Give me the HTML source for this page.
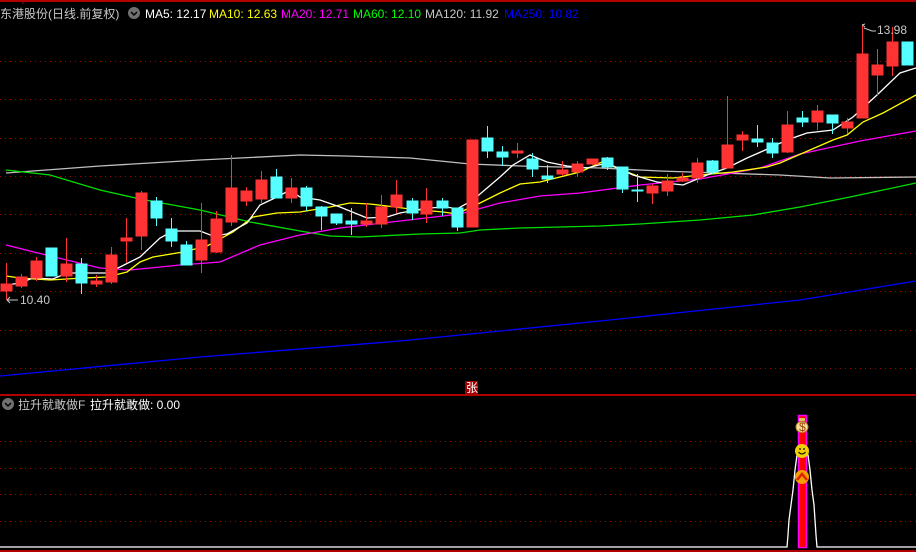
<!DOCTYPE html>
<html><head><meta charset="utf-8"><style>
html,body{margin:0;padding:0;background:#000;width:916px;height:552px;overflow:hidden}
svg{display:block}
text{font-family:"Liberation Sans","Noto Sans CJK SC",sans-serif;font-size:12px}
</style></head><body>
<svg width="916" height="552" viewBox="0 0 916 552" xmlns="http://www.w3.org/2000/svg">
<rect width="916" height="552" fill="#000"/>
<line x1="0" y1="1" x2="916" y2="1" stroke="#b00000" stroke-width="2"/>
<line x1="23" y1="0" x2="23" y2="4" stroke="#b00000"/>
<g stroke="#a00000" stroke-dasharray="1,4" stroke-width="1">
<line x1="0" y1="61.5" x2="916" y2="61.5"/><line x1="0" y1="99.5" x2="916" y2="99.5"/>
<line x1="0" y1="138.5" x2="916" y2="138.5"/><line x1="0" y1="176.5" x2="916" y2="176.5"/>
<line x1="0" y1="214.5" x2="916" y2="214.5"/><line x1="0" y1="253.5" x2="916" y2="253.5"/>
<line x1="0" y1="291.5" x2="916" y2="291.5"/><line x1="0" y1="330.5" x2="916" y2="330.5"/>
<line x1="0" y1="368.5" x2="916" y2="368.5"/>
<line x1="0" y1="441.5" x2="916" y2="441.5"/><line x1="0" y1="468.5" x2="916" y2="468.5"/>
<line x1="0" y1="494.5" x2="916" y2="494.5"/><line x1="0" y1="521.5" x2="916" y2="521.5"/>
</g>
<line x1="0" y1="395" x2="916" y2="395" stroke="#b00000" stroke-width="2"/>

<!-- MA lines -->
<g fill="none" stroke-width="1.3">
<polyline stroke="#0000ff" points="0,376 200,357 400,341 600,321 800,300 916,281"/>
<polyline stroke="#c0c0c0" points="6,173 100,166 200,160 300,155 345,156 410,158 470,164 520,166 600,168 660,171 780,175 830,178 916,177"/>
<polyline stroke="#00e000" points="6,170 50,175 100,190 140,199 200,210 250,222 300,231 330,236 360,237 420,234 460,233 480,230 520,228 600,226 640,224 700,220 753,215 800,207 850,197 916,183"/>
<polyline stroke="#ff00ff" points="6,245 50,256 100,268 130,270 180,265 220,262 260,245 300,235 340,228 400,221 460,214 500,203 540,196 580,193 640,185 700,179 760,168 800,154 860,141 916,131"/>
<polyline stroke="#ffff00" points="6,276 20,278 50,280 83,278 107,277 127,272 140,262 153,257 183,252 207,246 233,232 253,217 277,213 300,212 330,207 350,203 370,204 387,206 410,209 443,212 457,214 467,209 480,203 500,193 520,184 540,182 560,177 580,172 602,162 640,177 673,178 700,175 733,172 767,167 780,163 833,140 847,135 863,122 883,113 916,95"/>
<polyline stroke="#ffffff" points="6,285 20,283 33,278 53,279 67,273 83,273 107,273 120,267 140,257 160,238 173,231 200,231 213,236 227,234 247,223 260,205 277,197 290,190 300,197 320,200 340,207 367,218 387,217 400,213 427,208 447,207 457,209 473,200 500,177 513,165 530,155 547,162 567,166 587,168 607,163 633,175 657,182 683,185 707,175 727,168 747,158 763,151 787,140 807,133 833,130 853,117 877,95 900,73 916,68"/>
</g>

<!-- candles -->
<g id="c">
<!-- red: wick stroke + body -->
<g fill="#ff3333" stroke="#ff3333">
<line x1="6.5" y1="263" x2="6.5" y2="300"/><rect x="1" y="284" width="11" height="7"/>
<line x1="21.5" y1="274" x2="21.5" y2="288"/><rect x="16" y="277" width="11" height="9"/>
<line x1="36.5" y1="257" x2="36.5" y2="281"/><rect x="31" y="261" width="11" height="17"/>
<line x1="66.5" y1="238" x2="66.5" y2="282"/><rect x="61" y="264" width="11" height="12"/>
<line x1="96.5" y1="275" x2="96.5" y2="287"/><rect x="91" y="281" width="11" height="3"/>
<line x1="111.5" y1="247" x2="111.5" y2="284"/><rect x="106" y="255" width="11" height="27"/>
<line x1="126.5" y1="218" x2="126.5" y2="263"/><rect x="121" y="238" width="11" height="3"/>
<line x1="141.5" y1="191" x2="141.5" y2="250"/><rect x="136" y="193" width="11" height="43"/>
<line x1="201.5" y1="203" x2="201.5" y2="273"/><rect x="196" y="240" width="11" height="20"/>
<line x1="216.5" y1="211" x2="216.5" y2="253"/><rect x="211" y="219" width="11" height="33"/>
<line x1="231.5" y1="155" x2="231.5" y2="226"/><rect x="226" y="188" width="11" height="34"/>
<line x1="246.5" y1="187" x2="246.5" y2="206"/><rect x="241" y="191" width="11" height="10"/>
<line x1="261.5" y1="171" x2="261.5" y2="203"/><rect x="256" y="180" width="11" height="19"/>
<line x1="291.5" y1="178" x2="291.5" y2="203"/><rect x="286" y="188" width="11" height="10"/>
<line x1="366.5" y1="203" x2="366.5" y2="227"/><rect x="361" y="221" width="11" height="3"/>
<line x1="381.5" y1="195" x2="381.5" y2="228"/><rect x="376" y="207" width="11" height="17"/>
<line x1="396.5" y1="180" x2="396.5" y2="213"/><rect x="391" y="195" width="11" height="12"/>
<line x1="426.5" y1="188" x2="426.5" y2="223"/><rect x="421" y="201" width="11" height="13"/>
<rect x="467" y="140" width="11" height="87"/>
<line x1="517.5" y1="143" x2="517.5" y2="158"/><rect x="512" y="151" width="11" height="2"/>
<line x1="562.5" y1="161" x2="562.5" y2="176"/><rect x="557" y="170" width="11" height="4"/>
<line x1="577.5" y1="161" x2="577.5" y2="177"/><rect x="572" y="164" width="11" height="8"/>
<line x1="592.5" y1="159" x2="592.5" y2="165"/><rect x="587" y="159" width="11" height="5"/>
<line x1="652.5" y1="184" x2="652.5" y2="204"/><rect x="647" y="186" width="11" height="7"/>
<line x1="667.5" y1="174" x2="667.5" y2="196"/><rect x="662" y="181" width="11" height="10"/>
<line x1="682.5" y1="173" x2="682.5" y2="182"/><rect x="677" y="178" width="11" height="3"/>
<line x1="697.5" y1="158" x2="697.5" y2="183"/><rect x="692" y="163" width="11" height="15"/>
<line x1="727.5" y1="96" x2="727.5" y2="168"/><rect x="722" y="145" width="11" height="23"/>
<line x1="742.5" y1="131" x2="742.5" y2="151"/><rect x="737" y="135" width="11" height="5"/>
<line x1="787.5" y1="111" x2="787.5" y2="153"/><rect x="782" y="125" width="11" height="27"/>
<line x1="817.5" y1="105" x2="817.5" y2="130"/><rect x="812" y="111" width="11" height="11"/>
<line x1="847.5" y1="118" x2="847.5" y2="134"/><rect x="842" y="122" width="11" height="6"/>
<line x1="862.5" y1="25" x2="862.5" y2="118"/><rect x="857" y="54" width="11" height="64"/>
<line x1="877.5" y1="49" x2="877.5" y2="95"/><rect x="872" y="65" width="11" height="10"/>
<line x1="892.5" y1="27" x2="892.5" y2="76"/><rect x="887" y="42" width="11" height="24"/>
</g>
<g fill="#55ffff" stroke="#55ffff">
<line x1="51.5" y1="248" x2="51.5" y2="276"/><rect x="46" y="248" width="11" height="28"/>
<line x1="81.5" y1="258" x2="81.5" y2="294"/><rect x="76" y="264" width="11" height="19"/>
<line x1="156.5" y1="197" x2="156.5" y2="226"/><rect x="151" y="201" width="11" height="17"/>
<line x1="171.5" y1="218" x2="171.5" y2="247"/><rect x="166" y="229" width="11" height="12"/>
<line x1="186.5" y1="241" x2="186.5" y2="265"/><rect x="181" y="245" width="11" height="20"/>
<line x1="276.5" y1="169" x2="276.5" y2="198"/><rect x="271" y="177" width="11" height="21"/>
<line x1="306.5" y1="186" x2="306.5" y2="211"/><rect x="301" y="188" width="11" height="18"/>
<line x1="321.5" y1="206" x2="321.5" y2="230"/><rect x="316" y="207" width="11" height="9"/>
<line x1="336.5" y1="214" x2="336.5" y2="225"/><rect x="331" y="214" width="11" height="9"/>
<line x1="351.5" y1="208" x2="351.5" y2="235"/><rect x="346" y="221" width="11" height="3"/>
<line x1="412.5" y1="198" x2="412.5" y2="220"/><rect x="407" y="201" width="11" height="12"/>
<line x1="442.5" y1="198" x2="442.5" y2="216"/><rect x="437" y="201" width="11" height="7"/>
<line x1="457.5" y1="208" x2="457.5" y2="231"/><rect x="452" y="208" width="11" height="19"/>
<line x1="487.5" y1="126" x2="487.5" y2="158"/><rect x="482" y="138" width="11" height="13"/>
<line x1="502.5" y1="146" x2="502.5" y2="166"/><rect x="497" y="152" width="11" height="5"/>
<line x1="532.5" y1="153" x2="532.5" y2="177"/><rect x="527" y="159" width="11" height="10"/>
<line x1="547.5" y1="165" x2="547.5" y2="183"/><rect x="542" y="176" width="11" height="3"/>
<line x1="607.5" y1="157" x2="607.5" y2="170"/><rect x="602" y="158" width="11" height="9"/>
<line x1="622.5" y1="167" x2="622.5" y2="193"/><rect x="617" y="167" width="11" height="22"/>
<line x1="637.5" y1="174" x2="637.5" y2="202"/><rect x="632" y="190" width="11" height="1"/>
<line x1="712.5" y1="160" x2="712.5" y2="174"/><rect x="707" y="161" width="11" height="11"/>
<line x1="757.5" y1="125" x2="757.5" y2="147"/><rect x="752" y="139" width="11" height="3"/>
<line x1="772.5" y1="138" x2="772.5" y2="158"/><rect x="767" y="143" width="11" height="10"/>
<line x1="802.5" y1="111" x2="802.5" y2="127"/><rect x="797" y="118" width="11" height="4"/>
<line x1="832.5" y1="115" x2="832.5" y2="134"/><rect x="827" y="115" width="11" height="8"/>
<rect x="902" y="42" width="11" height="23"/>
</g>
</g>

<!-- labels -->
<text x="0" y="18" fill="#c8c8c8" font-size="13">东港股份(日线.前复权)</text>
<circle cx="134" cy="13" r="6" fill="#707070"/>
<path d="M131 12 L134 15 L137 12" stroke="#000" stroke-width="1.5" fill="none"/>
<text x="145" y="18" fill="#ffffff">MA5: 12.17</text>
<text x="209" y="18" fill="#ffff00">MA10: 12.63</text>
<text x="281" y="18" fill="#ff00ff">MA20: 12.71</text>
<text x="353" y="18" fill="#00ff00">MA60: 12.10</text>
<text x="425" y="18" fill="#c8c8c8">MA120: 11.92</text>
<text x="504" y="18" fill="#0000ff">MA250: 10.82</text>

<path d="M864 28 L872 31 L876 31" stroke="#c8c8c8" fill="none"/>
<path d="M862 25 L865 24 M862 25 L865 27" stroke="#c8c8c8"/>
<text x="877" y="34" fill="#c8c8c8">13.98</text>
<path d="M7 300 L18 300 M7 300 L10 297 M7 300 L10 303" stroke="#c8c8c8" fill="none"/>
<text x="20" y="304" fill="#c8c8c8">10.40</text>
<rect x="465" y="381" width="13" height="13" fill="#a00000"/>
<text x="466" y="392" fill="#fff" font-size="11">张</text>

<!-- bottom panel -->
<circle cx="8" cy="404" r="6" fill="#707070"/>
<path d="M5 403 L8 406 L11 403" stroke="#000" stroke-width="1.5" fill="none"/>
<text x="18" y="409" fill="#c8c8c8">拉升就敢做F</text>
<text x="90" y="409" fill="#ffffff">拉升就敢做: 0.00</text>

<polyline fill="none" stroke="#ffffff" stroke-width="1.3" points="0,547 787,547 788,535 789,520 791,505 793,490 795,470 797,455 808,455 810,470 812,490 814,505 815,520 816,535 817,547 916,547"/>
<rect x="798.5" y="415.5" width="8" height="132" fill="#ff0000" stroke="#ff00ff" stroke-width="1.5"/>
<rect x="800" y="417" width="5" height="130" fill="#ff0000"/>
<ellipse cx="802" cy="427" rx="6" ry="5.5" fill="#f0e0a0" stroke="#c08020"/>
<rect x="799" y="418" width="6" height="3" fill="#e0c060"/>
<text x="799" y="431" fill="#a04000" font-size="9">$</text>
<circle cx="802" cy="451" r="7" fill="#f0d000"/>
<circle cx="800" cy="449" r="0.9" fill="#000"/><circle cx="804" cy="449" r="0.9" fill="#000"/>
<path d="M798.5 452 Q802 456 805.5 452" stroke="#000" fill="none"/>
<circle cx="802" cy="477" r="7" fill="#f5a000"/>
<path d="M797 480 L802 474 L807 480" stroke="#e02000" stroke-width="2.5" fill="none"/>
<line x1="0" y1="551" x2="916" y2="551" stroke="#b00000" stroke-width="2"/>
</svg>
</body></html>
